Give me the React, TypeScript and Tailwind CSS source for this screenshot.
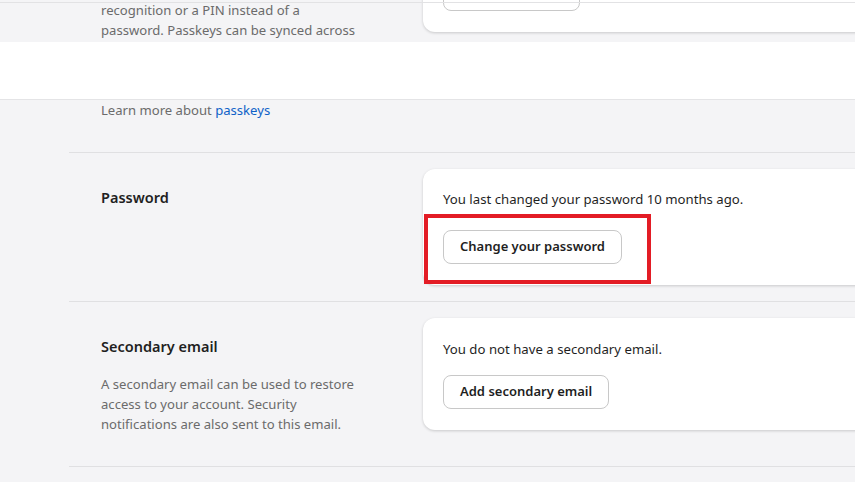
import { ReactNode } from "react";

const font = { fontFamily: '"Noto Sans", "Open Sans", Arial, sans-serif' };

function Card({ children, className = "" }: { children: ReactNode; className?: string }) {
  return (
    <div className={`relative w-[520px] shrink-0 rounded-xl bg-white pl-5 shadow-[0_1px_3px_rgba(0,0,0,0.18)] ${className}`}>
      {children}
    </div>
  );
}

function OutlineButton({ label }: { label: string }) {
  return (
    <button className="h-[34px] rounded-lg border border-[#c8c8c8] bg-white px-4 text-[13px] font-semibold text-[#1f1f1f]">
      {label}
    </button>
  );
}

export default function App() {
  return (
    <div className="h-[482px] w-full overflow-hidden bg-[#f4f4f6] text-[#1f1f1f]" style={font}>
      {/* scrolled-off passkeys section */}
      <div className="relative flex h-[42px] overflow-hidden">
        <div className="w-[423px] shrink-0 pl-[101px] text-[13.1px] leading-5 text-[#6b6b6b]">
          <p className="w-[265px]">
            recognition or a PIN instead of a password. Passkeys can be synced across
          </p>
        </div>
        <Card className="-mt-[60px] h-[92px]">
          <div className="absolute bottom-[21px] left-5 h-[40px] w-[137px] rounded-lg border border-[#c8c8c8]" />
        </Card>
        <div className="absolute left-0 right-0 top-[2px] h-px bg-[#e2e2e4]" />
      </div>

      <div className="h-[58px] border-b border-[#e4e4e6] bg-white" />

      <div className="h-[52px] pl-[101px] text-[13.1px] leading-5 text-[#6b6b6b]">
        Learn more about <a className="text-[#0f62c8]">passkeys</a>
      </div>

      <div className="ml-[69px] border-t border-[#e0e0e2]">
        {/* Password */}
        <div className="flex pb-4 pt-4">
          <div className="w-[354px] shrink-0 pl-8 pt-4 text-[14.5px] font-semibold leading-6">Password</div>
          <Card className="pb-[21px] pt-5">
            <p className="text-[13.2px] leading-5">You last changed your password 10 months ago.</p>
            <div className="mt-[21px]">
              <OutlineButton label="Change your password" />
            </div>
            <div className="pointer-events-none absolute left-px top-[45px] h-[70px] w-[227px] border-4 border-[#e31c25]" />
          </Card>
        </div>

        {/* Secondary email */}
        <div className="flex border-t border-[#e0e0e2] pb-8 pt-4">
          <div className="w-[354px] shrink-0 pl-8 pt-4">
            <div className="text-[14.5px] font-semibold leading-6">Secondary email</div>
            <p className="mt-4 w-[265px] text-[13.1px] leading-5 text-[#6b6b6b]">
              A secondary email can be used to restore access to your account. Security notifications are also sent to this email.
            </p>
          </div>
          <Card className="self-start pb-[21px] pt-[21px]">
            <p className="text-[13.2px] leading-5">You do not have a secondary email.</p>
            <div className="mt-4">
              <OutlineButton label="Add secondary email" />
            </div>
          </Card>
        </div>

        <div className="border-t border-[#e0e0e2]" />
      </div>
    </div>
  );
}
